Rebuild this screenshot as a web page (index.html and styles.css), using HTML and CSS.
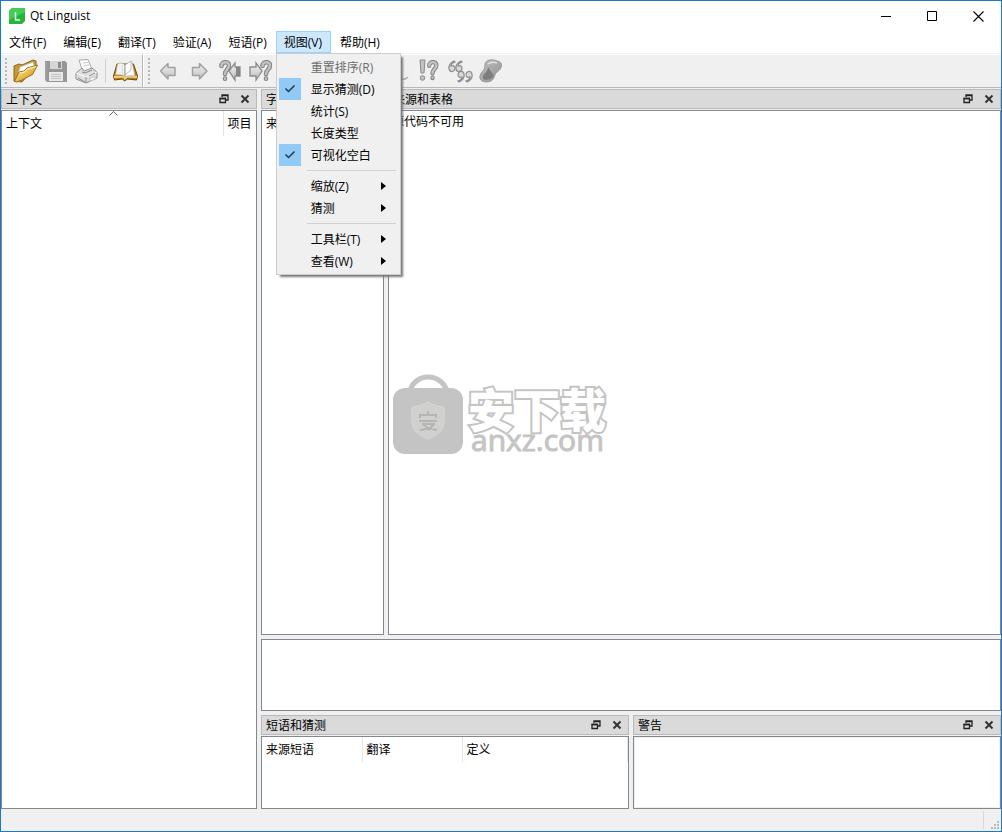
FILE: index.html
```html
<!DOCTYPE html>
<html lang="zh-CN">
<head>
<meta charset="utf-8">
<meta name="viewport" content="width=device-width, initial-scale=1">
<title>Qt Linguist</title>
<link rel="stylesheet" href="styles.css">
</head>
<body>
<svg class="defs" width="0" height="0" aria-hidden="true">
  <defs>
    <linearGradient id="gold" x1="0" y1="0" x2="1" y2="1"><stop offset="0" stop-color="#fff0b0"/><stop offset=".5" stop-color="#e9bf55"/><stop offset="1" stop-color="#a87712"/></linearGradient>
    <linearGradient id="silver" x1="0" y1="0" x2="0" y2="1"><stop offset="0" stop-color="#f4f4f4"/><stop offset="1" stop-color="#bcbcbc"/></linearGradient>
    <linearGradient id="steel" x1="0" y1="0" x2="1" y2="1"><stop offset="0" stop-color="#c4c4c4"/><stop offset="1" stop-color="#8d8d8d"/></linearGradient>
    <symbol id="float" viewBox="0 0 10 10"><path d="M3 3V1h6v5H7M3 1.5h6" fill="none" stroke="#222" stroke-width="1.3"/><path d="M1 4.5h5.5v4H1z" fill="#dadada" stroke="#222" stroke-width="1.3"/><path d="M.5 4.5H7" stroke="#222" stroke-width="1.5"/></symbol>
    <symbol id="close" viewBox="0 0 10 10"><path d="M1.5 1.5l7 7M8.5 1.5l-7 7" stroke="#333" stroke-width="2"/></symbol>
    <symbol id="question" viewBox="0 0 12 22"><g fill="none" stroke-linecap="round"><path d="M2.5 6c0-5 7.5-5 7.5-.5 0 4-4 4-4 8.5M6 18.5v.3" stroke="#868686" stroke-width="4.6"/><path d="M2.5 6c0-5 7.5-5 7.5-.5 0 4-4 4-4 8.5M6 18.5v.3" stroke="#c2c2c2" stroke-width="2.4"/></g></symbol>
  </defs>
</svg>
<div class="window">
  <header class="titlebar">
    <svg class="logo" viewBox="0 0 16 16" aria-hidden="true"><path d="M3 0h13v13l-3 3H0V3z" fill="#27b33d"/><path d="M3 0h13v4L0 12V3z" fill="#42cd55"/><path d="M6.5 4v8H11" fill="none" stroke="#dfffe3" stroke-width="1.5"/></svg>
    <h1 class="title">Qt Linguist</h1>
    <div class="caption-buttons">
      <button class="caption" aria-label="最小化"><svg viewBox="0 0 11 11"><path d="M0 5.5h10" stroke="#000"/></svg></button>
      <button class="caption" aria-label="最大化"><svg viewBox="0 0 11 11"><path d="M.5.5h9v9h-9z" fill="none" stroke="#000"/></svg></button>
      <button class="caption" aria-label="关闭"><svg viewBox="0 0 11 11"><path d="M.5.5l10 10M10.5.5l-10 10" stroke="#000" stroke-width="1.1"/></svg></button>
    </div>
  </header>

  <nav class="menubar">
    <button class="menu">文件(F)</button>
    <button class="menu">编辑(E)</button>
    <button class="menu">翻译(T)</button>
    <button class="menu">验证(A)</button>
    <button class="menu">短语(P)</button>
    <div class="menu-holder">
      <button class="menu open" aria-expanded="true">视图(V)</button>
      <div class="popup" role="menu">
        <button class="item" role="menuitem" disabled>重置排序(R)</button>
        <button class="item" role="menuitemcheckbox" aria-checked="true"><svg class="tick" viewBox="0 0 22 22"><path d="M6.5 10.5l3 3 6-6" fill="none" stroke="#26384a" stroke-width="1.5"/></svg>显示猜测(D)</button>
        <button class="item" role="menuitem">统计(S)</button>
        <button class="item" role="menuitem">长度类型</button>
        <button class="item" role="menuitemcheckbox" aria-checked="true"><svg class="tick" viewBox="0 0 22 22"><path d="M6.5 10.5l3 3 6-6" fill="none" stroke="#26384a" stroke-width="1.5"/></svg>可视化空白</button>
        <hr class="rule">
        <button class="item sub" role="menuitem">缩放(Z)</button>
        <button class="item sub" role="menuitem">猜测</button>
        <hr class="rule">
        <button class="item sub" role="menuitem">工具栏(T)</button>
        <button class="item sub" role="menuitem">查看(W)</button>
      </div>
    </div>
    <button class="menu">帮助(H)</button>
  </nav>

  <div class="toolbars">
    <div class="toolbar" role="toolbar" aria-label="文件">
      <span class="grip"></span>
      <button class="tool" aria-label="打开"><svg viewBox="0 0 26 26"><path d="M2 23L2 8l5-2 3 1 11-5 3 1v5L10 24z" fill="#c79a35" stroke="#8f6915"/><path d="M5 19L8 9 21 4l2 6-13 12z" fill="#fff" stroke="#aaa" stroke-width=".6"/><path d="M8 16l9-5" stroke="#ddd"/><path d="M2.5 23.5L7 14l5-1 3-3 10.5-3-5 9.5L10 22l-5 2z" fill="url(#gold)" stroke="#9b7217"/><path d="M7.5 15l5-1 3-3L24 8.5" fill="none" stroke="#fff5c6"/></svg></button>
      <button class="tool" aria-label="保存"><svg viewBox="0 0 26 26"><path d="M2 3h20l2 2v19H4l-2-2z" fill="#969696"/><path d="M7 3h12v8H7z" fill="#d6d6d6"/><path d="M15 4h3v6h-3z" fill="#8c8c8c"/><path d="M6 14h14v9H6z" fill="#e8e8e8"/><path d="M8 16.5h10M8 18.5h10M8 20.5h10" stroke="#c2c2c2"/><path d="M3 23V4" stroke="#adadad"/></svg></button>
      <button class="tool" aria-label="打印"><svg viewBox="0 0 26 26"><path d="M5 2l9-.5 4 10-9 3z" fill="#fafafa" stroke="#aaa"/><path d="M9 5l5-.5M10 8l5-1" stroke="#ccc"/><path d="M2 15l6-5 2 3 8-3 5 4v6l-11 5-10-4z" fill="#ddd" stroke="#919191"/><path d="M2 15l10 4 11-5" fill="none" stroke="#fff"/><path d="M12 19v6M15 18l6-3M4 20l7 4" stroke="#909090"/><path d="M8 14l3 1 7-3" fill="none" stroke="#888"/><path d="M15 21l5-2 3 1-6 3z" fill="#fafafa" stroke="#aaa" stroke-width=".6"/></svg></button>
      <span class="divider"></span>
      <button class="tool" aria-label="短语书"><svg viewBox="0 0 26 26"><path d="M5 6L1.5 18l1 4 8-1 2 2 3-2 9 1 1-4-4-12z" fill="#b87d1b" stroke="#6e4808"/><path d="M2 19l10-.5 1 2 2-2 10 .5" fill="none" stroke="#f4d37d" stroke-width="2"/><path d="M5.500 5.500q5-1.500 7.500 1.500v11q-4-2-9.500-1z" fill="#f2f2f2" stroke="#b6a67c" stroke-width=".6"/><path d="M13 7l6-4 1.500 3 2.500 12q-6-1-10 1z" fill="#fff" stroke="#9e9b91" stroke-width=".6"/><path d="M13 7v11M19 3v9l-6 5" fill="none" stroke="#aaa" stroke-width=".8"/><path d="M10.500 7v9" stroke="#dcdcdc"/></svg></button>
    </div>
    <div class="toolbar" role="toolbar" aria-label="翻译">
      <span class="grip"></span>
      <button class="tool" aria-label="上一个"><svg viewBox="0 0 26 26"><path d="M5.500 13L13 5.500v4h7v8h-7v3.500z" fill="url(#silver)" stroke="#a2a2a2" stroke-width="1.500" stroke-linejoin="round"/></svg></button>
      <button class="tool" aria-label="下一个"><svg viewBox="0 0 26 26"><path d="M21 13l-7.500-7.500v4h-7v8h7v3.500z" fill="url(#silver)" stroke="#a2a2a2" stroke-width="1.500" stroke-linejoin="round"/></svg></button>
      <button class="tool" aria-label="上一个未完成"><svg viewBox="0 0 26 26"><path d="M12 13l6-8v4h5v9h-5v4z" fill="url(#silver)" stroke="#8d8d8d" stroke-width="1.300"/><path d="M19 9h4v9h-4z" fill="#858585"/><use href="#question" x="2" y="2" width="12" height="22"/></svg></button>
      <button class="tool" aria-label="下一个未完成"><svg viewBox="0 0 26 26"><path d="M14 13L8 5v4H2v9h6v4z" fill="url(#silver)" stroke="#8d8d8d" stroke-width="1.300"/><use href="#question" x="12" y="2" width="12" height="22"/></svg></button>
      <button class="tool" aria-label="完成并下一个"></button>
      <button class="tool" aria-label="完成"></button>
      <span class="divider wide"></span>
      <button class="tool" aria-label="快捷键"></button>
      <button class="tool" aria-label="空白"><svg viewBox="0 0 26 26"><path d="M14 20q5 3 9-1" fill="none" stroke="#aaa" stroke-width="1.500"/></svg></button>
      <button class="tool" aria-label="标点"><svg viewBox="0 0 26 26"><path d="M4 2h5l-1 13H5z" fill="#c2c2c2" stroke="#8b8b8b"/><circle cx="6.500" cy="20" r="2.300" fill="#c2c2c2" stroke="#8b8b8b"/><use href="#question" x="10" y="2" width="13" height="21"/></svg></button>
      <button class="tool" aria-label="短语匹配"><svg viewBox="0 0 26 26"><g fill="#d8d8d8" stroke="#8f8f8f" stroke-width="1.200"><path d="M7 3q-6 3-5 8c1 4 6 3 6-1 0-2-2-3-4-2 0-2 1-3 4-4z"/><path d="M14 3q-6 3-5 8c1 4 6 3 6-1 0-2-2-3-4-2 0-2 1-3 4-4z"/><path d="M12 24q6-3 5-8c-1-4-6-3-6 1 0 2 2 3 4 2 0 2-1 3-4 4z"/><path d="M20 24q6-3 5-8c-1-4-6-3-6 1 0 2 2 3 4 2 0 2-1 3-4 4z"/></g></svg></button>
      <button class="tool" aria-label="占位符"><svg viewBox="0 0 26 26"><path d="M7 7c0-6 8-6 12-4 7 1 5 8 0 11-3 2-2 7-6 9-5 2-12 1-11-5 1-5 5-5 5-11z" fill="url(#steel)" stroke="#9a9a9a"/><path d="M10 9l6 9q-4 4-9 4-4-2-1-6 4-3 4-7z" fill="#7d7d7d"/><path d="M10 6q4-3 9-1" fill="none" stroke="#e2e2e2" stroke-width="1.500"/></svg></button>
    </div>
  </div>

  <main class="workspace">
    <section class="dock">
      <header class="dock-title"><h2>上下文</h2><button aria-label="浮动"><svg><use href="#float"/></svg></button><button aria-label="关闭"><svg><use href="#close"/></svg></button></header>
      <div class="pane">
        <svg class="sort" viewBox="0 0 9 5" aria-hidden="true"><path d="M.5 4.500l4-4 4 4" fill="none" stroke="#666"/></svg>
        <table class="list"><thead><tr><th>上下文</th><th class="count">项目</th></tr></thead></table>
      </div>
    </section>
    <div class="center">
      <div class="sources">
        <section class="dock">
          <header class="dock-title"><h2>字符串</h2></header>
          <div class="pane"><table class="list"><thead><tr><th>来源文本</th></tr></thead></table></div>
        </section>
        <section class="dock">
          <header class="dock-title"><h2>来源和表格</h2><button aria-label="浮动"><svg><use href="#float"/></svg></button><button aria-label="关闭"><svg><use href="#close"/></svg></button></header>
          <div class="pane"><p class="message">源代码不可用</p></div>
        </section>
        <div class="watermark">
          <svg class="bag" viewBox="0 0 72 80" aria-hidden="true"><path d="M17 21C20-3 52-3 56 21" fill="none" stroke="#c4c4c4" stroke-width="5"/><rect x="1" y="14" width="70" height="66" rx="12" fill="#c4c4c4"/><path d="M36 28q8 5 16 5v15q0 11-16 17-16-6-16-17V33q8 0 16-5z" fill="#d0d0cf" stroke="#d8d8d4"/><g fill="none" stroke="#b5b5b5" stroke-width="2"><path d="M36 37v3M28 44v-3h16v3M27 47h18M30 50h13M31 50q4 5 14 6M42 50q-3 5-14 6"/></g></svg>
          <div class="brand"><span class="brand-name">安下载</span><span class="brand-site">anxz.com</span></div>
        </div>
      </div>
      <div class="pane editor"></div>
      <div class="bottom">
        <section class="dock">
          <header class="dock-title"><h2>短语和猜测</h2><button aria-label="浮动"><svg><use href="#float"/></svg></button><button aria-label="关闭"><svg><use href="#close"/></svg></button></header>
          <div class="pane"><table class="list phrases"><thead><tr><th>来源短语</th><th>翻译</th><th class="rest">定义</th></tr></thead></table></div>
        </section>
        <section class="dock">
          <header class="dock-title"><h2>警告</h2><button aria-label="浮动"><svg><use href="#float"/></svg></button><button aria-label="关闭"><svg><use href="#close"/></svg></button></header>
          <div class="pane inset"></div>
        </section>
      </div>
    </div>
  </main>
  <footer class="status"><svg class="size-grip" viewBox="0 0 8 8" aria-hidden="true"><path d="M6 0h2v2H6zM3 3h2v2H3zM6 3h2v2H6zM0 6h2v2H0zM3 6h2v2H3zM6 6h2v2H6z" fill="#bababa"/></svg></footer>
</div>
</body>
</html>
```
FILE: styles.css
```css
* { box-sizing: border-box; }
body {
  margin: 0;
  color: #000;
  font: 12px/16px "Open Sans", "Noto Sans CJK SC", sans-serif;
}
button {
  margin: 0;
  padding: 0;
  border: 0;
  background: none;
  color: inherit;
  font: inherit;
}
h1, h2, p { margin: 0; font: inherit; }
svg { display: block; }
.defs { position: absolute; }
.window {
  display: flex;
  flex-direction: column;
  height: 100vh;
  border: 1px solid #1979ca;
  background: #f0f0f0;
}

.titlebar {
  display: flex;
  align-items: center;
  height: 30px;
  padding-left: 8px;
  background: #fff;
}
.logo { width: 16px; height: 16px; }
.title { flex: 1; margin-left: 5px; }
.caption-buttons { display: flex; }
.caption {
  display: grid;
  place-items: center;
  width: 46px;
  height: 30px;
}
.caption svg { width: 11px; height: 11px; }

.menubar {
  display: flex;
  gap: 1px;
  height: 23px;
  background: #fff;
  border-bottom: 1px solid #f0f0f0;
}
.menu {
  height: 22px;
  padding: 2px 7px 0;
  border: 1px solid transparent;
  white-space: nowrap;
}
.menu.open { padding: 2px 8px 0 7px; border-color: #99d1ff; background: #cce8ff; }
.menu-holder { position: relative; }
.popup {
  position: absolute;
  z-index: 2;
  top: 22px;
  left: 0;
  width: 125px;
  padding: 2px;
  border: 1px solid #ccc;
  background: #f0f0f0;
  box-shadow: 3px 3px 2px -1px #777;
}
.item {
  display: block;
  position: relative;
  width: 100%;
  height: 22px;
  padding: 2px 0 0 32px;
  text-align: left;
  white-space: nowrap;
}
.item:disabled { color: #6d6d6d; }
.tick {
  position: absolute;
  top: 0;
  left: 0;
  width: 22px;
  height: 22px;
  background: #91c9f7;
}
.sub::after {
  content: "";
  position: absolute;
  top: 7px;
  right: 12px;
  border: 4px solid transparent;
  border-left: 5px solid #000;
  border-right: 0;
}
.rule {
  height: 1px;
  margin: 4px 2px 4px 28px;
  border: 0;
  background: #d2d2d2;
}

.toolbars { display: flex; height: 34px; border-bottom: 1px solid #b9b9b9; }
.toolbar {
  display: flex;
  align-items: center;
  padding-left: 4px;
  border-top: 1px solid #fff;
}
.toolbar:first-child { padding-right: 2px; border-right: 1px solid #b9b9b9; }
.toolbar + .toolbar { flex: 1; border-left: 1px solid #fff; }
.grip {
  width: 2px;
  height: 26px;
  margin-right: 2px;
  background: repeating-linear-gradient(#b6b6b6 0 2px, transparent 2px 4px);
}
.tool { display: grid; place-items: center; width: 31px; height: 31px; }
.tool svg { width: 26px; height: 26px; }
.divider { width: 1px; height: 24px; margin: 0 3px; background: #d0d0d0; }
.divider.wide { margin: 0 6px; }

.workspace {
  flex: 1;
  display: grid;
  grid-template-columns: 256px minmax(0, 1fr);
  gap: 4px;
  min-height: 0;
  padding-top: 1px;
}
.center { display: flex; flex-direction: column; gap: 4px; min-height: 0; }
.sources {
  position: relative;
  flex: 1;
  display: grid;
  grid-template-columns: 123px minmax(0, 1fr);
  gap: 4px;
  min-height: 0;
}
.bottom { display: grid; grid-template-columns: 1fr 1fr; gap: 4px; height: 94px; }
.dock { display: flex; flex-direction: column; gap: 1px; min-width: 0; }
.dock-title {
  display: flex;
  align-items: center;
  gap: 11px;
  height: 20px;
  padding: 0 6px 0 4px;
  border: 1px solid #b9b9b9;
  background: #dadada;
}
.dock-title h2 { flex: 1; padding-top: 2px; white-space: nowrap; }
.dock-title svg { width: 10px; height: 10px; }
.pane { position: relative; flex: 1; border: 1px solid #828790; background: #fff; }
.pane.editor { flex: 0 0 72px; }
.pane.inset { box-shadow: inset 0 0 0 1px #f0f0f0; }
.message { padding: 3px; }
.sort { position: absolute; top: 0; left: 107px; width: 9px; height: 5px; }

.list { width: 100%; border-collapse: collapse; table-layout: fixed; }
.list th {
  height: 25px;
  padding: 0 4px;
  border-right: 1px solid #e5e5e5;
  font-weight: normal;
  text-align: left;
  white-space: nowrap;
}
.list .count { width: 33px; border-right: 0; }
.phrases th { width: 100px; }
.phrases .rest { width: auto; }

.watermark {
  position: absolute;
  top: 285px;
  left: 131px;
  display: flex;
  gap: 4px;
}
.bag { width: 72px; height: 80px; }
.brand { display: flex; flex-direction: column; padding-top: 9px; color: #c4c4c4; }
.brand-name {
  color: #fff;
  font: 900 46px/48px "Noto Sans CJK SC", sans-serif;
  -webkit-text-stroke: 4px #c4c4c4;
  paint-order: stroke fill;
  stroke-linejoin: round;
}
.brand-site { padding-left: 3px; font-size: 30px; line-height: 18px; -webkit-text-stroke: 1px #c4c4c4; }

.status {
  display: flex;
  justify-content: flex-end;
  align-items: flex-end;
  height: 22px;
  padding: 2px;
}
.size-grip { width: 8px; height: 8px; }
.status::before { content: ""; height: 18px; margin-right: 7px; border-left: 1px solid #d7d7d7; }
```
